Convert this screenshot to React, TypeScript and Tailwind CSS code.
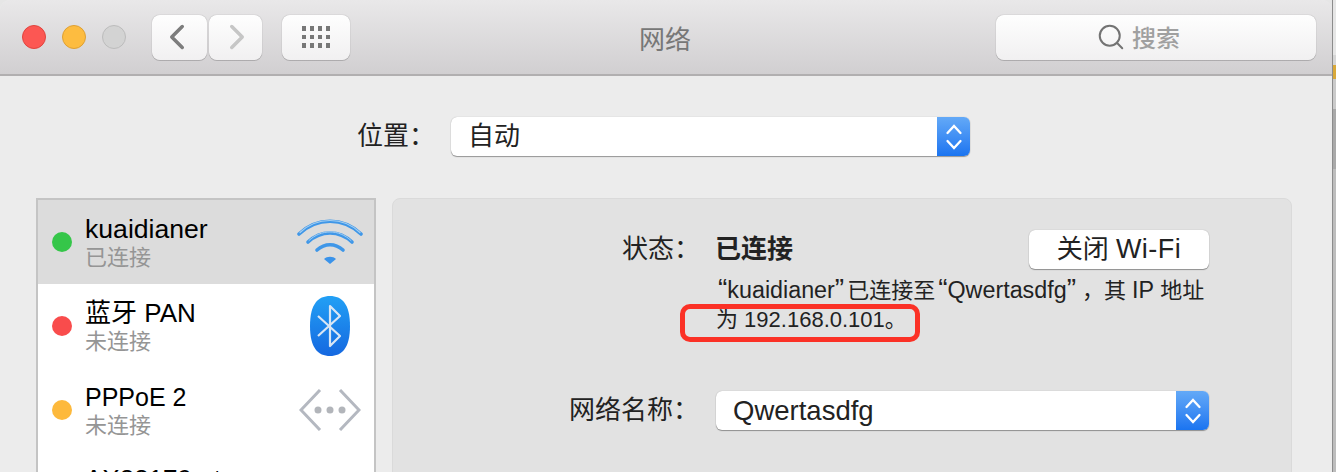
import type { ReactNode } from "react";
import { ChevronLeft, ChevronRight, Search } from "lucide-react";

const cjk = "font-['Liberation_Sans','Noto_Sans_CJK_SC',sans-serif]";

function WifiIcon() {
  return (
    <svg width="66" height="48" viewBox="0 0 66 48" fill="none" strokeLinecap="round">
      <path d="M2 16C20 -1 46 -1 64 16" stroke="#3f97e8" strokeWidth="3.6" />
      <path d="M3 14.5C20 -1.5 46 -1.5 63 14.5" stroke="#a5cff1" strokeWidth="1.2" />
      <path d="M11 24C24 12 42 12 55 24" stroke="#3f97e8" strokeWidth="3.6" />
      <path d="M12 22.5C24 11 42 11 54 22.5" stroke="#a5cff1" strokeWidth="1" />
      <path d="M20 32C28 25 38 25 46 32" stroke="#3f97e8" strokeWidth="3.6" />
      <path d="M27 41C30 38 36 38 39 41L33 46Z" fill="#3a93ea" />
    </svg>
  );
}

function BluetoothIcon() {
  return (
    <svg width="42" height="60" viewBox="0 0 42 60" fill="none">
      <defs>
        <linearGradient id="bt" x1="0" y1="0" x2="0" y2="1">
          <stop offset="0" stopColor="#22a0f5" />
          <stop offset="1" stopColor="#1568e0" />
        </linearGradient>
      </defs>
      <path d="M21 0C33 0 41 8 41 30C41 52 33 60 21 60C9 60 1 52 1 30C1 8 9 0 21 0Z" fill="url(#bt)" />
      <path d="M9 20L31 40L21 50V10L31 20L9 40" stroke="#d9e6f5" strokeWidth="2.2" strokeLinejoin="round" />
    </svg>
  );
}

function PppoeIcon() {
  return (
    <svg width="62" height="42" viewBox="0 0 62 42" fill="none">
      <path d="M21 1L2 21L21 41" stroke="#b4b8c0" strokeWidth="3" />
      <path d="M41 1L60 21L41 41" stroke="#b4b8c0" strokeWidth="3" />
      <circle cx="19" cy="21" r="3.5" fill="#b2b5ba" />
      <circle cx="31" cy="21" r="3.5" fill="#b2b5ba" />
      <circle cx="43" cy="21" r="3.5" fill="#b2b5ba" />
    </svg>
  );
}

function Stepper() {
  return (
    <div className="flex w-[33px] shrink-0 items-center justify-center rounded-r-[6px] bg-gradient-to-b from-[#63a9f7] to-[#1a74f0]">
      <svg width="18" height="30" viewBox="0 0 18 30" fill="none" stroke="#fff" strokeWidth="2.3" strokeLinecap="round">
        <path d="M2.5 11L9 4L15.5 11" />
        <path d="M2.5 19L9 26L15.5 19" />
      </svg>
    </div>
  );
}

function SelectBox({ children, width }: { children: ReactNode; width: string }) {
  return (
    <div className={`flex h-[39px] ${width} rounded-[6px] bg-white shadow-[0_1px_1px_rgba(0,0,0,0.35),0_0_1px_rgba(0,0,0,0.3)]`}>
      <div className="flex-1 pl-[17px] leading-[39px] text-[#222]">{children}</div>
      <Stepper />
    </div>
  );
}

function ToolButton({ className, children }: { className: string; children: ReactNode }) {
  return (
    <div className={`flex h-[45px] items-center justify-center rounded-[8px] bg-gradient-to-b from-[#fefefe] to-[#f1f0f1] shadow-[0_0_1px_rgba(0,0,0,0.45),0_1px_0_rgba(0,0,0,0.15)] ${className}`}>
      {children}
    </div>
  );
}

function Quoted({ text, lead, trail }: { text: string; lead: string; trail: string }) {
  return (
    <>
      <span className={`${lead} text-[28px] leading-none`}>“</span>
      <span className="text-[23.3px]">{text}</span>
      <span className={`${trail} text-[28px] leading-none`}>”</span>
    </>
  );
}

const services = [
  { name: "kuaidianer", size: "text-[26.6px]", status: "已连接", dot: "bg-[#35c649]", icon: <WifiIcon />, active: true },
  { name: "蓝牙 PAN", size: "text-[26px]", status: "未连接", dot: "bg-[#f94c4c]", icon: <BluetoothIcon />, active: false },
  { name: "PPPoE 2", size: "text-[25px]", status: "未连接", dot: "bg-[#fdb93c]", icon: <PppoeIcon />, active: false },
];

// bits of the desktop showing past the window's right edge
const desktopStrip = [
  "h-[55px] bg-[#e6e6e6]",
  "h-[10px] bg-[#d6d6d6]",
  "h-[14px] bg-[#d9a93a]",
  "h-[30px] bg-[#cacaca]",
  "h-[60px] bg-[#a9a9a9]",
  "h-[303px] bg-[#bdbdbd]",
];

export default function App() {
  return (
    <div className={`flex h-[472px] w-[1336px] overflow-hidden bg-[#e6e6e6] ${cjk}`}>
      <div className="h-[472px] w-[1332px] shrink-0 overflow-hidden rounded-tr-[10px] rounded-tl-[10px] bg-[#ececec]">
        {/* title bar */}
        <div className="flex h-[76px] items-center border-b-2 border-[#b1afb0] bg-gradient-to-b from-[#e9e8e9] to-[#d1cfd1]">
          <div className="ml-[22px] flex gap-[16px]">
            <span className="h-6 w-6 rounded-full border border-[#e0443e] bg-[#fc5753]" />
            <span className="h-6 w-6 rounded-full border border-[#dea034] bg-[#fdbc40]" />
            <span className="h-6 w-6 rounded-full border border-[#bcbcbc] bg-[#d3d3d3]" />
          </div>
          <div className="ml-[26px] flex gap-[2px]">
            <ToolButton className="w-[55px] pr-[6px]">
              <ChevronLeft size={42} strokeWidth={2} color="#7d7d7d" />
            </ToolButton>
            <ToolButton className="w-[53px] pl-[3px]">
              <ChevronRight size={42} strokeWidth={2} color="#c6c6c6" />
            </ToolButton>
          </div>
          <ToolButton className="ml-[20px] w-[68px]">
            <div className="grid grid-cols-4 gap-x-[3.5px] gap-y-[4px]">
              {Array.from({ length: 12 }).map((_, i) => (
                <span key={i} className="h-[4.5px] w-[4.5px] bg-[#777]" />
              ))}
            </div>
          </ToolButton>
          <div className="ml-[287px] w-[56px] pt-[7px] text-center text-[26px] text-[#777]">网络</div>
          <ToolButton className="ml-[303px] w-[320px] pr-[36px]">
            <Search size={30} strokeWidth={1.6} color="#737373" />
            <span className="ml-[6px] pt-[3px] text-[24px] font-medium text-[#a0a0a0]">搜索</span>
          </ToolButton>
        </div>

        {/* location */}
        <div className="mt-[41px] flex items-center">
          <span className="ml-[357px] w-[94px] text-[26px] text-[#222]">位置：</span>
          <SelectBox width="w-[519px]">
            <span className="text-[26px]">自动</span>
          </SelectBox>
        </div>

        <div className="mt-[42px] flex">
          {/* services list */}
          <div className="ml-[36px] h-[300px] w-[340px] shrink-0 border-2 border-[#c4c4c4] bg-white">
            {services.map((s) => (
              <div key={s.name} className={`flex h-[84px] items-center ${s.active ? "bg-[#dcdcdc]" : ""}`}>
                <span className={`ml-[14px] h-5 w-5 shrink-0 rounded-full ${s.dot}`} />
                <div className="ml-[13px] flex-1">
                  <div className={`${s.size} leading-[30px] text-black`}>{s.name}</div>
                  <div className="text-[22px] leading-[27px] text-[#959595]">{s.status}</div>
                </div>
                <div className="mr-[11px] flex w-[66px] justify-center">{s.icon}</div>
              </div>
            ))}
            <div className="ml-[47px] whitespace-nowrap pt-[12px] text-[26px] leading-[30px] text-black">AX88179...t</div>
          </div>

          {/* detail panel */}
          <div className="ml-[16px] h-[300px] w-[900px] rounded-t-[8px] border border-[#dadada] bg-[#e2e2e2]">
            <div className="ml-[229px] mt-[31px] flex">
              <span className="w-[78px] pt-[1px] text-right text-[26px] leading-[36px] text-[#222]">状态：</span>
              <span className="ml-[15px] w-[314px] pt-[1px] text-[26px] leading-[36px] font-bold text-[#222]">已连接</span>
              <div className="flex h-[39px] w-[180px] items-center justify-center rounded-[6px] bg-white text-[26px] text-[#222] shadow-[0_1px_1px_rgba(0,0,0,0.35),0_0_1px_rgba(0,0,0,0.3)]">
                关闭&nbsp;<span className="text-[27px] tracking-[0.5px]">Wi-Fi</span>
              </div>
            </div>
            <div className="relative ml-[323px] mt-[6px] w-[500px] whitespace-nowrap text-[22px] leading-[29px] text-[#222]">
              <p>
                <Quoted text="kuaidianer" lead="pl-[2px]" trail="pr-[3px]" />
                已连接至
                <Quoted text="Qwertasdfg" lead="pl-[3px]" trail="pr-[6px]" />
                ，其 <span className="text-[23.3px]">IP</span> 地址
              </p>
              <p>为 192.168.0.101。</p>
              <span className="absolute left-[-36px] top-[29px] h-[38px] w-[240px] rounded-[10px] border-[5px] border-[#fb3126]" />
            </div>
            <div className="mt-[57px] flex items-center">
              <span className="ml-[176px] w-[147px] text-[26px] text-[#222]">网络名称：</span>
              <SelectBox width="w-[493px]">
                <span className="text-[27.5px]">Qwertasdfg</span>
              </SelectBox>
            </div>
          </div>
        </div>
      </div>
      <div className="w-[4px] shrink-0 border-l border-[#8c8c8c]">
        {desktopStrip.map((band) => (
          <div key={band} className={band} />
        ))}
      </div>
    </div>
  );
}
